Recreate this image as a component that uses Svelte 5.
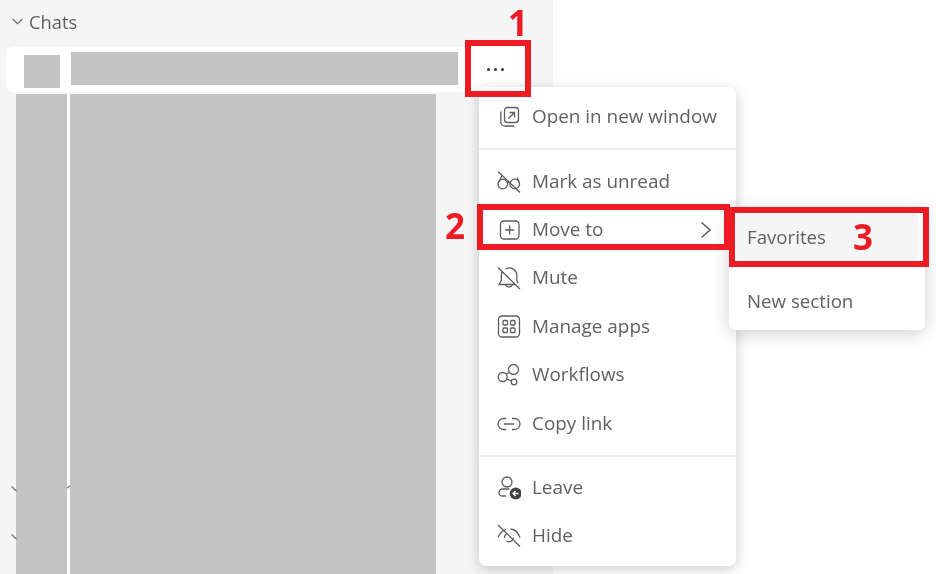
<script lang="ts">
  const submenu = ['Favorites', 'New section'];
</script>

<div class="page">
  <aside class="sidebar">
    <div class="section-head">
      <svg class="head-chev" viewBox="0 0 14 10" width="13" height="9"><path d="M1.500 2 7 7.500 12.500 2" /></svg>
      <span>Chats</span>
    </div>
    <div class="chat-row">
      <div class="avatar"></div>
      <div class="chat-name"></div>
      <div class="dots"><i></i><i></i><i></i></div>
    </div>
    <div class="redacted">
      <div class="col-a"></div>
      <div class="col-b"></div>
    </div>
    <svg class="peek peek-1" viewBox="0 0 6 6" width="6" height="6"><path d="M0.500 0.500 5.500 5" /></svg>
    <svg class="peek peek-2" viewBox="0 0 6 6" width="6" height="6"><path d="M0.500 0.500 5.500 5" /></svg>
    <svg class="peek peek-3" viewBox="0 0 4 4" width="4" height="4"><path d="M0 3 3 1" /></svg>
  </aside>

  <div class="menu">
    <div class="item">
      <svg viewBox="0 0 24 24"><rect x="7.500" y="2.500" width="14" height="15" rx="3" /><path d="M3.800 6.500v10.500a4 4 0 0 0 4 4h9.500" /><path d="M11.500 13.500l6-6M12.500 7.500h5v5" /></svg>
      <span>Open in new window</span>
    </div>
    <div class="divider"></div>
    <div class="item">
      <svg viewBox="0 0 24 24"><circle cx="5.800" cy="14" r="4.800" /><circle cx="17.800" cy="14" r="4.800" /><path d="M10.400 13c1-1 2.400-1 3.200 0M1.500 12.500 5 5.500M22.200 12.500 20 7.500M1 1.500l22 21" /></svg>
      <span>Mark as unread</span>
    </div>
    <div class="item">
      <svg viewBox="0 0 24 24"><rect x="3.500" y="3" width="18.500" height="18" rx="3.500" /><path d="M12.700 7.500v9M8.200 12h9" /></svg>
      <span>Move to</span>
      <svg class="chev" viewBox="0 0 12 18"><path d="M1.500 1.500 10 9l-8.500 7.500" /></svg>
    </div>
    <div class="item">
      <svg viewBox="0 0 24 24"><path d="M1 1.500 23 23M5.500 5c-.8 1.300-1.200 3-1.200 4.800v4.700l-2.300 4h16M8.500 3A7.500 7.500 0 0 1 19.800 10v4.500l1.400 2.500M8.500 18.800a3.800 3.800 0 0 0 7 0" /></svg>
      <span>Mute</span>
    </div>
    <div class="item">
      <svg viewBox="0 0 24 24"><rect x="1.500" y="1" width="21" height="21" rx="3.500" /><rect x="6" y="5.500" width="4.500" height="4.500" rx="1" /><rect x="13.500" y="5.500" width="4.500" height="4.500" rx="1" /><rect x="6" y="13" width="4.500" height="4.500" rx="1" /><rect x="13.500" y="13" width="4.500" height="4.500" rx="1" /></svg>
      <span>Manage apps</span>
    </div>
    <div class="item">
      <svg viewBox="0 0 24 24"><circle cx="5.700" cy="14" r="4.500" /><circle cx="16.500" cy="6.500" r="5" /><circle cx="17" cy="19" r="2.800" /><path d="M9.200 11.200 12 9.500M9.700 16l4.800 2" /></svg>
      <span>Workflows</span>
    </div>
    <div class="item">
      <svg viewBox="0 0 24 24"><path d="M9 6.500H6.500a5.500 5.500 0 0 0 0 11H9M15 6.500h2.500a5.500 5.500 0 0 1 0 11H15M7 12h10" /></svg>
      <span>Copy link</span>
    </div>
    <div class="divider"></div>
    <div class="item">
      <svg viewBox="0 0 24 24"><circle cx="10" cy="6" r="5" /><path d="M9 20H5a3 3 0 0 1-3-3v-.5A3.500 3.500 0 0 1 5.500 13h7" /><circle class="solid" cx="18.700" cy="17.500" r="6" /><path class="inv" d="M21.500 17.500h-5.500M18.500 15l-2.500 2.500 2.500 2.500" /></svg>
      <span>Leave</span>
    </div>
    <div class="item">
      <svg viewBox="0 0 24 24"><path d="M1 1l22 21.500M1 13.500c2-4.500 5-7 8-7.800M13.500 5c4.500.3 7.800 3.700 9.500 8.500" /><path d="M7.500 14a4.500 4.500 0 0 1 3-4.500M16.500 13.500a4.500 4.500 0 0 1-7 3.500" /></svg>
      <span>Hide</span>
    </div>
  </div>

  <div class="submenu">
    {#each submenu as label, i}
      <div class="sub-item" class:hover={i === 0}>{label}</div>
    {/each}
  </div>

  <div class="mark mark-1"></div>
  <div class="mark mark-2"></div>
  <div class="mark mark-3"></div>
  <span class="num num-1">1</span>
  <span class="num num-2">2</span>
  <span class="num num-3">3</span>
</div>

<style>
  :global(body) {
    margin: 0;
    background: #fff;
  }
  .page {
    position: relative;
    width: 936px;
    height: 574px;
    overflow: hidden;
    background: #fff;
    font-family: "Open Sans", "Noto Sans", sans-serif;
    color: #616161;
    filter: blur(0.35px);
  }
  .sidebar {
    position: relative;
    width: 553px;
    height: 574px;
    box-sizing: border-box;
    background: #f5f5f5;
    padding: 8px 0 0 6px;
    display: flex;
    flex-direction: column;
  }
  .section-head {
    display: flex;
    align-items: center;
    gap: 5px;
    height: 26px;
    padding-left: 5px;
    font-size: 18.300px;
    color: #616161;
  }
  .head-chev {
    fill: none;
    stroke: #616161;
    stroke-width: 1.200;
  }
  .chat-row {
    display: flex;
    align-items: center;
    margin-top: 13px;
    height: 45px;
    width: 520px;
    padding: 0 0 0 18px;
    box-sizing: border-box;
    background: #fff;
    border-radius: 7px;
  }
  .avatar {
    flex: none;
    width: 36px;
    height: 33px;
    background: #c3c3c3;
    margin-top: 4px;
  }
  .chat-name {
    flex: none;
    width: 387px;
    height: 33px;
    margin-left: 11px;
    margin-top: -2px;
    background: #c3c3c3;
  }
  .dots {
    display: flex;
    gap: 4px;
    margin-left: 29px;
  }
  .dots i {
    width: 3px;
    height: 3px;
    border-radius: 50%;
    background: #333;
  }
  .redacted {
    display: flex;
    flex: 1;
    margin-top: 2px;
    margin-left: 10px;
    gap: 3px;
    background: linear-gradient(#fbfbfb, #fbfbfb) 51px 0 / 3px 100% no-repeat;
  }
  .col-a {
    width: 51px;
    background: #c3c3c3;
  }
  .col-b {
    width: 366px;
    background: #c3c3c3;
  }
  .peek {
    position: absolute;
    fill: none;
    stroke: #777;
    stroke-width: 1.300;
  }
  .peek-1 { left: 11px; top: 486px; }
  .peek-2 { left: 11px; top: 534px; }
  .peek-3 { left: 67px; top: 485px; }
  .menu {
    position: absolute;
    left: 479px;
    top: 87px;
    width: 257px;
    height: 479px;
    box-sizing: border-box;
    padding: 6px 0;
    background: #fff;
    border-radius: 7px;
    box-shadow: 0 3px 14px rgba(0, 0, 0, 0.2);
  }
  .item {
    display: flex;
    align-items: center;
    height: 48.400px;
    padding: 0 24px 0 18px;
    font-size: 18.900px;
    white-space: nowrap;
  }
  .item svg {
    width: 24px;
    height: 24px;
    flex: none;
    margin-right: 11px;
    fill: none;
    stroke: #5c5c5c;
    stroke-width: 1.300;
  }
  .item .solid {
    fill: #424242;
    stroke: none;
  }
  .item .inv {
    stroke: #fff;
  }
  .item span {
    flex: 1;
    padding-bottom: 2px;
  }
  .item svg.chev {
    width: 12px;
    height: 18px;
    margin: 0;
    stroke-width: 1.500;
  }
  .divider {
    height: 2px;
    margin: 7px 0;
    background: #ececec;
  }
  .submenu {
    position: absolute;
    left: 729px;
    top: 208px;
    width: 196px;
    height: 122px;
    box-sizing: border-box;
    padding: 6px 7px;
    background: #fff;
    border-radius: 7px;
    box-shadow: 0 4px 18px rgba(0, 0, 0, 0.18);
  }
  .sub-item {
    display: flex;
    align-items: center;
    box-sizing: border-box;
    height: 46px;
    padding: 0 0 2px 11px;
    margin-bottom: 18px;
    font-size: 18.700px;
    border-radius: 4px;
  }
  .sub-item.hover {
    background: #f5f5f5;
  }
  .mark {
    position: absolute;
    box-sizing: border-box;
    border: 6px solid #ed1c24;
  }
  .mark-1 { left: 465px; top: 40px; width: 66px; height: 57px; }
  .mark-2 { left: 477px; top: 204px; width: 253px; height: 46px; }
  .mark-3 { left: 729px; top: 207px; width: 200px; height: 60px; }
  .num {
    position: absolute;
    font-family: "Open Sans", "Noto Sans", sans-serif;
    font-weight: 700;
    font-size: 35px;
    line-height: 1;
    color: #ed1c24;
  }
  .num-1 { left: 508px; top: 5px; }
  .num-2 { left: 445px; top: 208px; }
  .num-3 { left: 853px; top: 219px; }
</style>
